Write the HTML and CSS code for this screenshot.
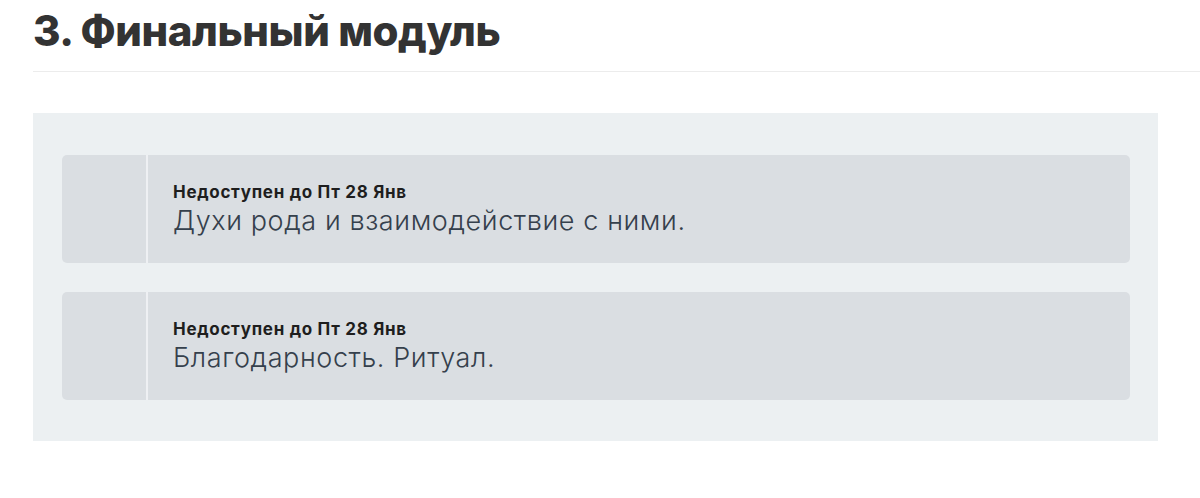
FILE: index.html
```html
<!DOCTYPE html>
<html lang="ru">
<head>
  <meta charset="UTF-8">
  <title>Финальный модуль</title>
  <meta name="viewport" content="width=device-width, initial-scale=1.0">
  <link rel="stylesheet" href="styles.css">
</head>
<body>

<div class="module">
  <h2 class="module-title">3. Финальный модуль</h2>

  <div class="lessons">
    <div class="lesson">
      <div class="lesson-side"></div>
      <div class="lesson-body">
        <div class="lesson-status">Недоступен до Пт 28 Янв</div>
        <div class="lesson-name">Духи рода и взаимодействие с ними.</div>
      </div>
    </div>

    <div class="lesson">
      <div class="lesson-side"></div>
      <div class="lesson-body">
        <div class="lesson-status">Недоступен до Пт 28 Янв</div>
        <div class="lesson-name">Благодарность. Ритуал.</div>
      </div>
    </div>
  </div>
</div>

</body>
</html>
```

FILE: styles.css
```css
body {
  margin: 0;
  font-family: Inter, "Noto Sans", Arial, sans-serif;
  background: #fff;
}
.module {
  padding-left: 33px;
}
.module-title {
  margin: 0;
  padding-top: 8px;
  height: 63px;
  font-size: 42px;
  font-weight: 800;
  line-height: 46px;
  color: #333;
  border-bottom: 1px solid #ececec;
  letter-spacing: -0.45px;
}
.lessons {
  margin-top: 41px;
  width: 1068px;
  padding: 42px 28px 41px 29px;
  background: #ecf0f2;
  display: flex;
  flex-direction: column;
  gap: 29px;
}
.lesson {
  display: flex;
  height: 108px;
  background: #dadee2;
  border-radius: 5px;
}
.lesson-side {
  width: 84px;
  border-right: 2px solid #eef0f3;
}
.lesson-body {
  padding: 27px 0 0 25px;
}
.lesson-status {
  font-size: 17px;
  font-weight: 700;
  color: #1e1e1e;
  line-height: 20px;
  letter-spacing: 0.7px;
}
.lesson-name {
  margin-top: 3px;
  font-size: 27px;
  font-weight: 300;
  color: #35404c;
  line-height: 32px;
  letter-spacing: 0.6px;
}
```
